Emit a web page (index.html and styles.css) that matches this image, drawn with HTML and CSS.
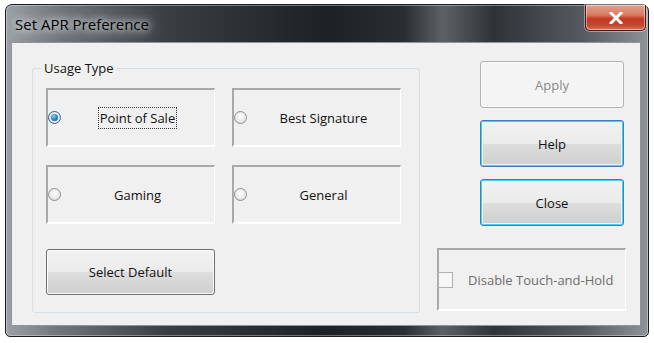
FILE: index.html
```html
<!DOCTYPE html>
<html lang="en">

<head>
    <meta charset="UTF-8">
    <title>Set APR Preference</title>
    <link rel="stylesheet" href="styles.css">
</head>

<body>
    <div class="window">
        <div class="titlebar">
            <span class="title">Set APR Preference</span>
            <button class="close-x" aria-label="Close">
                <svg width="14" height="12" viewBox="0 0 14 12">
                    <path d="M2 1 L12 11 M12 1 L2 11" stroke="#fff" stroke-width="3" stroke-linecap="square" />
                </svg>
            </button>
        </div>

        <div class="client">
            <fieldset class="group">
                <legend>Usage Type</legend>
                <div class="radio-grid">
                    <label class="radio-box">
                        <span class="radio checked"></span>
                        <span class="radio-text"><span class="focus">Point of Sale</span></span>
                    </label>
                    <label class="radio-box">
                        <span class="radio"></span>
                        <span class="radio-text">Best Signature</span>
                    </label>
                    <label class="radio-box">
                        <span class="radio"></span>
                        <span class="radio-text">Gaming</span>
                    </label>
                    <label class="radio-box">
                        <span class="radio"></span>
                        <span class="radio-text">General</span>
                    </label>
                </div>
                <button class="btn btn-default">Select Default</button>
            </fieldset>

            <div class="side">
                <button class="btn btn-side" disabled>Apply</button>
                <button class="btn btn-side btn-blue">Help</button>
                <button class="btn btn-side btn-blue">Close</button>

                <div class="check-box">
                    <span class="check"></span>
                    <span class="check-text">Disable Touch-and-Hold</span>
                </div>
            </div>
        </div>
    </div>
</body>

</html>
```

FILE: styles.css
```css
* {
    box-sizing: border-box;
}

html,
body {
    margin: 0;
    background-color: #ffffff;
    font-family: 'Open Sans', 'Noto Sans', sans-serif;
}

.window {
    margin: 4px 0 0 5px;
    width: 644px;
    height: 333px;
    padding: 0 7px 10px 5px;
    border: 1px solid #1b1d20;
    border-radius: 7px 7px 5px 5px;
    background: linear-gradient(90deg, #9ba1a7 0%, #70767c 8%, #3a3e43 25%, #1d2024 50%, #2a2e33 62%, #5c6166 68%, #2f3338 76%, #565b61 90%, #8d9399 100%);
    box-shadow: inset 0 0 0 1px rgba(255, 255, 255, 0.35);
    display: flex;
    flex-direction: column;
}

.titlebar {
    height: 37px;
    display: flex;
    align-items: flex-start;
    justify-content: space-between;
}

.title {
    margin-top: 9px;
    margin-left: 4px;
    font-size: 15px;
    color: #000;
    text-shadow: 0 0 6px #d8dadc, 0 0 10px #d8dadc, 0 0 16px #c8cacc;
}

.close-x {
    width: 61px;
    height: 26px;
    margin-right: -5px;
    border: 1px solid #4a1810;
    border-top: none;
    border-radius: 0 0 5px 5px;
    background: linear-gradient(180deg, #e3a28f 0%, #d97a63 40%, #c4391f 55%, #c2472f 80%, #d8735c 100%);
    box-shadow: inset 0 0 0 1px rgba(255, 255, 255, 0.45), 0 0 0 1px rgba(255, 255, 255, 0.4);
    display: flex;
    align-items: center;
    justify-content: center;
    padding: 0;
}

.client {
    flex: 1;
    background-color: #f0f0f0;
    border: 1px solid #8e949a;
    display: flex;
    align-items: flex-start;
    padding: 16px 0 0 20px;
    font-size: 13px;
    color: #111;
}

.group {
    width: 388px;
    height: 254px;
    margin: 0;
    padding: 0 13px;
    border: 1px solid #d5dfe5;
    border-radius: 3px;
}

.group legend {
    padding: 0 2px;
    margin-left: -4px;
    font-size: 13px;
}

.radio-grid {
    margin-top: 11px;
    display: grid;
    grid-template-columns: 169px 169px;
    grid-auto-rows: 59px;
    column-gap: 17px;
    row-gap: 18px;
}

.radio-box {
    display: flex;
    align-items: center;
    border-top: 2px solid #a9a9a9;
    border-left: 2px solid #a9a9a9;
    border-right: 1px solid #ffffff;
    border-bottom: 2px solid #ffffff;
}

.radio {
    width: 13px;
    height: 13px;
    border-radius: 50%;
    border: 1px solid #8f8f8f;
    background: radial-gradient(circle at 50% 40%, #ffffff 0%, #ebebeb 50%, #d3d3d3 100%);
    flex-shrink: 0;
    display: flex;
    align-items: center;
    justify-content: center;
}

.radio.checked {
    border-color: #2c628b;
}

.radio.checked::after {
    content: "";
    width: 7px;
    height: 7px;
    border-radius: 50%;
    background: radial-gradient(circle at 40% 35%, #8ad1f5 0%, #2a8fd0 45%, #0c4d80 100%);
}

.radio-text {
    flex: 1;
    text-align: center;
}

.focus {
    outline: 1px dotted #333;
    outline-offset: 1px;
}

.btn {
    font-family: inherit;
    font-size: 13px;
    color: #111;
    border: 1px solid #707070;
    border-radius: 3px;
    background: linear-gradient(180deg, #f2f2f2 0%, #ebebeb 50%, #dddddd 51%, #cfcfcf 100%);
    box-shadow: inset 0 0 0 1px #fbfbfb;
}

.btn-default {
    margin-top: 25px;
    width: 169px;
    height: 46px;
}

.side {
    margin-left: 17px;
    margin-top: 2px;
    width: 189px;
    display: flex;
    flex-direction: column;
    align-items: flex-end;
}

.btn-side {
    width: 144px;
    height: 47px;
    margin-right: 2px;
    margin-bottom: 12px;
}

.btn-side:disabled {
    color: #8b8b8b;
    border-color: #adb2b5;
    background: #f4f4f4;
}

.btn-blue {
    border-color: #3c7fb1;
    box-shadow: inset 0 0 0 1px #48d0f5, inset 0 0 0 2px #e4f4fb;
}

.btn-blue:last-of-type {
    margin-bottom: 0;
}

.check-box {
    margin-top: 22px;
    width: 189px;
    height: 63px;
    display: flex;
    align-items: center;
    border-top: 2px solid #a9a9a9;
    border-left: 2px solid #a9a9a9;
    border-right: 1px solid #ffffff;
    border-bottom: 2px solid #ffffff;
}

.check {
    width: 15px;
    height: 16px;
    border: 1px solid #b1b1b1;
    background: #f6f6f6;
    margin-left: -1px;
}

.check-text {
    margin-left: 15px;
    color: #6d6d6d;
}
```
